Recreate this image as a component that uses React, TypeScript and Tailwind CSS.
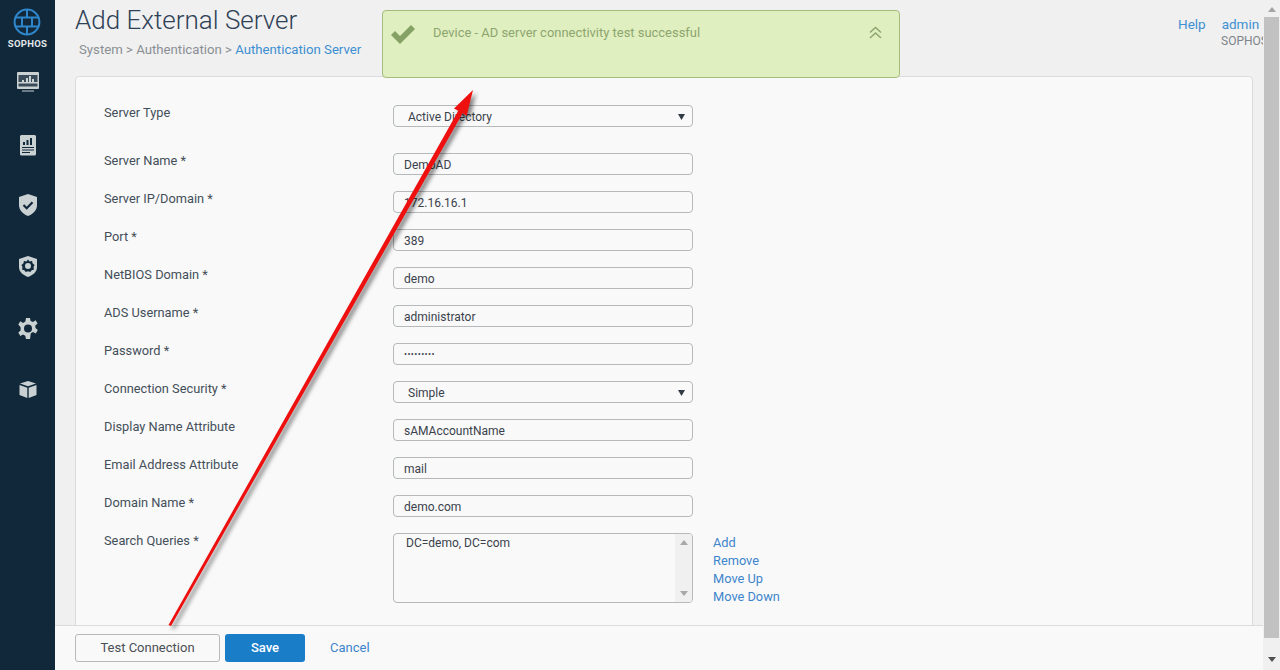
const rows: { label: string; value: string; type?: string; select?: boolean }[] = [
  { label: 'Server Name *', value: 'DemoAD' },
  { label: 'Server IP/Domain *', value: '172.16.16.1' },
  { label: 'Port *', value: '389' },
  { label: 'NetBIOS Domain *', value: 'demo' },
  { label: 'ADS Username *', value: 'administrator' },
  { label: 'Password *', value: '•••••••••', type: 'password' },
  { label: 'Connection Security *', value: 'Simple', select: true },
  { label: 'Display Name Attribute', value: 'sAMAccountName' },
  { label: 'Email Address Attribute', value: 'mail' },
  { label: 'Domain Name *', value: 'demo.com' },
];

function SelectBox({ value }: { value: string }) {
  return (
    <div className="flex h-[22px] w-[300px] items-center justify-between rounded-[4px] border border-[#b5b9b9] pl-[14px] pr-[7px] text-[12px] text-[#39424c]">
      <span className="pt-[2px]">{value}</span>
      <svg width="7" height="7" viewBox="0 0 7 7"><path d="M0 1h7L3.5 7z" fill="#2f3a44" /></svg>
    </div>
  );
}

function TextBox({ value, type }: { value: string; type?: string }) {
  return (
    <div className="flex h-[22px] w-[300px] items-center rounded-[4px] border border-[#b5b9b9] pl-[10px] pt-[2px] text-[12px] text-[#39424c]">
      <span className={type === 'password' ? 'text-[9px] tracking-[0.4px]' : ''}>{value}</span>
    </div>
  );
}

function SideIcon({ children, className }: { children: React.ReactNode; className: string }) {
  return <div className={`flex items-center justify-center ${className}`}>{children}</div>;
}

export default function App() {
  return (
    <div className="relative flex h-[670px] w-[1280px] overflow-hidden bg-[#f0f0f0] font-['Roboto',sans-serif]">
      {/* left nav */}
      <div className="flex w-[55px] shrink-0 flex-col items-center bg-[#11283a]">
        <svg className="ml-[-1px] mt-[8px]" width="28" height="28" viewBox="0 0 28 28" fill="none" stroke="#2f86cb" strokeWidth="2">
          <circle cx="14" cy="14" r="12.4" />
          <path d="M2 9.500h24M2 18.500h24M9 9.500v9M19 9.500v9M14 1.500v8M14 18.500v8" />
        </svg>
        <div className="mt-[2px] text-[9.5px] font-bold leading-[12px] tracking-[0.3px] text-[#e4e8ea]">SOPHOS</div>
        <SideIcon className="mt-[21px] h-[22px]">
          <svg width="22" height="20" viewBox="0 0 22 20">
            <path d="M0 1a1 1 0 0 1 1-1h20a1 1 0 0 1 1 1v15a1 1 0 0 1-1 1H1a1 1 0 0 1-1-1z" fill="#c9d1d3" />
            <path d="M1.500 3h19v7h-19zM1.500 11.500h19v3h-19z" fill="#3a4c5a" />
            <path d="M5 8h2v2H5zM9 6h2v4H9zM12 4h2v6h-2zM15 7h2v3h-2z" fill="#c9d1d3" />
            <path d="M5 18.500h12v1H5z" fill="#c9d1d3" />
          </svg>
        </SideIcon>
        <SideIcon className="mt-[40px] h-[23px]">
          <svg width="18" height="22" viewBox="0 0 18 22">
            <path d="M1 2a2 2 0 0 1 2-1h12a2 2 0 0 1 2 1v18a1.500 1.500 0 0 1-1.500 1.500h-13A1.500 1.500 0 0 1 1 20z" fill="#c9d1d3" />
            <path d="M4 8h2v3H4zM7.500 6h2v5h-2zM11 4h2v7h-2zM3 13h12v1H3zM3 15.500h12v1H3zM3 18h8v1H3z" fill="#11283a" />
          </svg>
        </SideIcon>
        <SideIcon className="mt-[38px] h-[22px]">
          <svg width="18" height="22" viewBox="0 0 18 22">
            <path d="M9 0l9 3v8c0 5.500-4 9-9 11-5-2-9-5.500-9-11V3z" fill="#c9d1d3" />
            <path d="M4.500 11l3.200 3.200 5.800-6" fill="none" stroke="#11283a" strokeWidth="2.200" />
          </svg>
        </SideIcon>
        <SideIcon className="mt-[39px] h-[22px]">
          <svg width="18" height="21" viewBox="0 0 18 21">
            <path d="M9 0l9 3v8c0 5-4 8-9 10-5-2-9-5-9-10V3z" fill="#c9d1d3" />
            <path d="M9 3.500l1.600 2 2.400-.4.700 2.300 1.900 1.500-1.100 2.200.5 2.400-2.300.7-1.500 1.900-2.200-.9-2.200.9-1.500-1.900-2.300-.7.500-2.400-1.100-2.200 1.900-1.500.7-2.300 2.400.4z" fill="#11283a" />
            <circle cx="9" cy="10" r="3" fill="#c9d1d3" />
          </svg>
        </SideIcon>
        <SideIcon className="mt-[40px] h-[22px]">
          <svg width="20" height="21" viewBox="0 0 20 21">
            <path d="M8 0h4l.6 3 2.400 1 2.600-1.700 2 3.300-2.300 2 .2 2.400 2.300 2-2 3.400-2.800-1.400-2.200 1.300L12 21H8l-.7-3.300-2.300-1.200-2.700 1.500-2-3.400 2.300-2V9.200L.3 6.600l2-3.300L5 4.900l2.400-1.300z" fill="#c9d1d3" />
            <circle cx="10" cy="10.500" r="4" fill="#11283a" />
          </svg>
        </SideIcon>
        <SideIcon className="mt-[40px] h-[20px]">
          <svg width="18" height="17" viewBox="0 0 18 17">
            <path d="M9 0l8 2.500L9 5.200 1 2.500z" fill="#c9d1d3" />
            <path d="M.5 4l7.800 2.700V17L.5 14zM17.500 4L9.700 6.700V17l7.800-3z" fill="#c9d1d3" />
          </svg>
        </SideIcon>
      </div>

      {/* main column */}
      <div className="flex min-w-0 flex-1 flex-col overflow-hidden">
        <div className="flex h-[76px] shrink-0 justify-between">
          <div className="pl-[20px] pt-[2px]">
            <div className="text-[26px] font-light leading-[36px] text-[#2f4156]">Add External Server</div>
            <div className="mt-[3px] pl-[4px] text-[13.2px] leading-[18px] text-[#8a8f94]">
              System &gt; Authentication &gt; <span className="text-[#3d8fd1]">Authentication Server</span>
            </div>
          </div>
          <div className="w-[85px] shrink-0 overflow-hidden pt-[16px] whitespace-nowrap text-[13.500px]">
            <div className="flex gap-[16px] leading-[17px] text-[#3d8fd1]">
              <span>Help</span>
              <span>admin</span>
            </div>
            <div className="pl-[43px] text-[12px] leading-[17px] text-[#7e8489]">SOPHOS</div>
          </div>
        </div>

        <div className="min-h-0 flex-1 overflow-hidden">
          <div className="ml-[20px] mr-[10px] h-[600px] rounded-t-[4px] border border-[#dcdcdc] bg-[#f9f9f9] pl-[28px] pt-[28px] text-[12.800px] text-[#444f5a]">
            <div className="flex h-[48px] items-start">
              <div className="w-[289px] leading-[16px]">Server Type</div>
              <SelectBox value="Active Directory" />
            </div>
            {rows.map((r) => (
              <div key={r.label} className="flex h-[38px] items-start">
                <div className="w-[289px] leading-[16px]">{r.label}</div>
                {r.select ? <SelectBox value={r.value} /> : <TextBox value={r.value} type={r.type} />}
              </div>
            ))}
            <div className="flex items-start">
              <div className="w-[289px] leading-[16px]">Search Queries *</div>
              <div className="flex h-[70px] w-[300px] justify-between overflow-hidden rounded-[4px] border border-[#b5b9b9]">
                <div className="pl-[12px] pt-[1px] text-[12px] leading-[16px] text-[#39424c]">DC=demo, DC=com</div>
                <div className="flex w-[17px] flex-col items-center justify-between bg-[#f0f0f0] py-[6px]">
                  <svg width="8" height="5" viewBox="0 0 8 5"><path d="M4 0l4 5H0z" fill="#a8a8a8" /></svg>
                  <svg width="8" height="5" viewBox="0 0 8 5"><path d="M0 0h8L4 5z" fill="#a8a8a8" /></svg>
                </div>
              </div>
              <div className="ml-[20px] pt-[1px] text-[12.800px] leading-[18px] text-[#3d85cc]">
                <div>Add</div>
                <div>Remove</div>
                <div>Move Up</div>
                <div>Move Down</div>
              </div>
            </div>
          </div>
        </div>

        <div className="flex h-[45px] shrink-0 items-start gap-[5px] border-t border-[#dcdcdc] bg-[#f9f9f9] pl-[20px] pt-[8px] text-[13px]">
          <div className="flex h-[28px] w-[145px] items-center justify-center rounded-[3px] border border-[#b9b9b9] text-[#4a4f55]">Test Connection</div>
          <div className="flex h-[28px] w-[80px] items-center justify-center rounded-[3px] bg-[#1a7dc8] font-medium text-white">Save</div>
          <div className="ml-[20px] flex h-[28px] items-center text-[#3d85cc]">Cancel</div>
        </div>
      </div>

      {/* page scrollbar */}
      <div className="flex w-[17px] shrink-0 flex-col items-center bg-[#f0f0f0]">
        <svg className="mt-[7px]" width="8" height="5" viewBox="0 0 8 5"><path d="M4 0l4 5H0z" fill="#a3a3a3" /></svg>
        <div className="mt-[5px] h-[621px] w-[15px] bg-[#c1c1c1]" />
        <svg className="mt-[19px]" width="8" height="5" viewBox="0 0 8 5"><path d="M0 0h8L4 5z" fill="#505050" /></svg>
      </div>

      {/* success alert */}
      <div className="absolute left-[382px] top-[10px] flex h-[68px] w-[518px] items-start rounded-[4px] border border-[#a4bd7f] bg-[#e0efbf] pl-[7px] pr-[17px] pt-[12px]">
        <svg className="mt-[1px]" width="26" height="22" viewBox="0 0 26 22">
          <path d="M1 11l4-4 5 5L21 1l4 4L10 20z" fill="#85a165" />
        </svg>
        <div className="ml-[17px] flex-1 text-[12.950px] leading-[20px] text-[#8da56f]">Device - AD server connectivity test successful</div>
        <svg className="mt-[3px]" width="13" height="13" viewBox="0 0 13 13" fill="none" stroke="#8da56f" strokeWidth="1.500">
          <path d="M1 6.500L6.500 1.500l5.500 5M1 12L6.500 7l5.500 5" />
        </svg>
      </div>

      {/* annotation arrow */}
      <svg className="pointer-events-none absolute left-0 top-0 drop-shadow-[3px_3px_2px_rgba(0,0,0,0.5)]" width="1280" height="670" viewBox="0 0 1280 670">
        <polygon points="473,90 466.600,116 462.700,113.200 171,626 168.500,625 458.300,110.800 454,108.500" fill="#ee0f0f" />
      </svg>
    </div>
  );
}
